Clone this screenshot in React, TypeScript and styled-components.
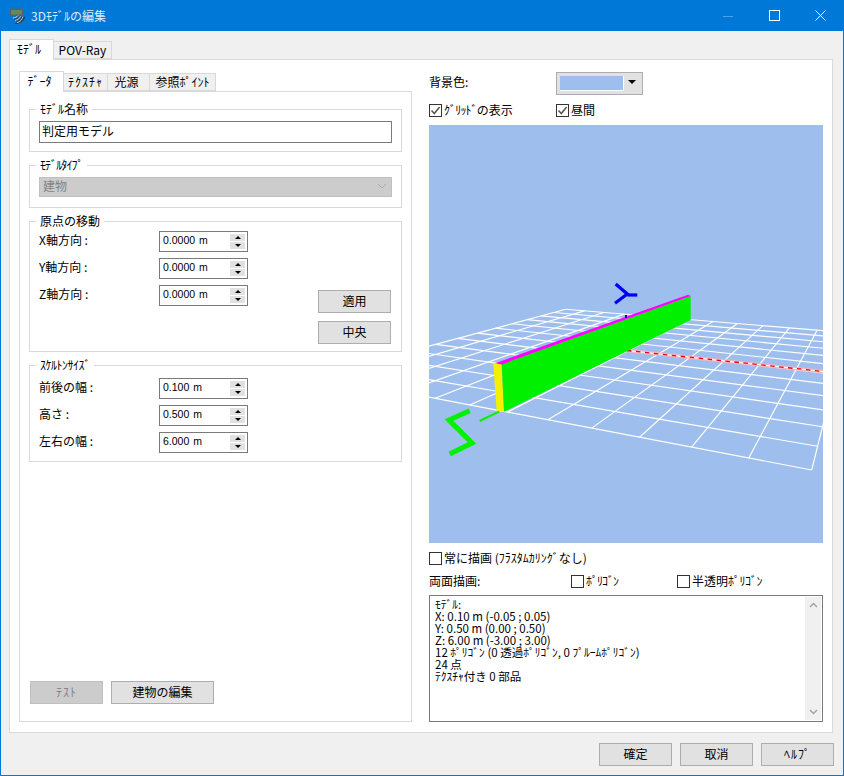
import React from "react";
import styled, { createGlobalStyle } from "styled-components";

const Global = createGlobalStyle`
  html, body { margin: 0; padding: 0; background: #f0f0f0; overflow: hidden; }
  body { font-family: "Noto Sans CJK JP", "Liberation Sans", sans-serif; font-size: 12px; color: #000; }
  * { box-sizing: border-box; }
`;

const Window = styled.div`
  width: 844px; height: 776px; display: flex; flex-direction: column;
  border: 1px solid #0078d7; border-top: none; background: #f0f0f0;
`;
const TitleBar = styled.header`
  height: 31px; flex: none; margin: 0 -1px; background: #0078d7; display: flex; align-items: center;
  padding-left: 9px; padding-right: 1px; color: #dcecfa; line-height: 16px;
`;
const TitleText = styled.span`margin-left: 6px; flex: 1;`;
const CaptionButton = styled.span`
  width: 46px; height: 31px; display: flex; align-items: center; justify-content: center;
`;
const Body = styled.main`
  flex: 1; min-height: 0; display: flex; flex-direction: column; padding: 8px 9px 9px 8px;
`;
const TabStrip = styled.div`
  height: 20px; flex: none; display: flex; align-items: flex-start; position: relative; z-index: 1;
`;
const Tab = styled.div<{ $active?: boolean; $w: number; $pr?: number }>`
  width: ${p => p.$w}px; flex: none; text-align: center; line-height: 17px;
  border: 1px solid #d9d9d9;
  padding-right: ${p => p.$pr ?? 0}px;
  ${p => p.$active
    ? `height: 21px; background: #fff; border-bottom: none;`
    : `height: 18px; margin-top: 2px; background: #f0f0f0; border-left: none; line-height: 16px;`}
`;
const Kana = styled.span<{ $track: number }>`letter-spacing: ${p => p.$track}px;`;
const OuterPanel = styled.section`
  flex: 1; min-height: 0; margin-right: 1px; background: #fff; border: 1px solid #d9d9d9;
  padding: 11px 9px 10px 9px; display: flex; gap: 17px;
`;
const LeftColumn = styled.div`width: 393px; flex: none; display: flex; flex-direction: column;`;
const InnerPanel = styled.div`
  flex: 1; min-height: 0; border: 1px solid #d9d9d9; padding: 10px 9px 17px 9px;
  display: flex; flex-direction: column; gap: 6px;
`;
const Group = styled.fieldset<{ $top: number; $bottom: number }>`
  margin: 0; min-width: 0; border: 1px solid #d9d9d9;
  padding: ${p => p.$top}px 9px ${p => p.$bottom}px 9px;
`;
const Legend = styled.legend`
  margin-left: -3px; padding: 0 4px; height: 14px; line-height: 14px; font-size: 12px;
`;
const NameInput = styled.input`
  display: block; width: 100%; height: 22px; border: 1px solid #7a7a7a; background: #fff; padding: 0 2px 3px 2px;
  font: 12px/17px "Noto Sans CJK JP", sans-serif; color: #000; outline: none;
`;
const DisabledSelect = styled.div`
  height: 20px; background: #cccccc; border: 1px solid #bfbfbf; color: #838383; line-height: 16px;
  padding: 0 4px 2px 3px; display: flex; justify-content: space-between; align-items: center;
`;
const Split = styled.div`display: flex; justify-content: space-between; align-items: flex-end; height: 113px; padding-right: 1px;`;
const Rows = styled.div`align-self: flex-start; display: flex; flex-direction: column; gap: 6px; width: 209px;`;
const Row = styled.div`display: flex; align-items: center; justify-content: space-between; height: 21px;`;
const RowLabel = styled.span`line-height: 16px; margin-top: -3px;`;
const Spin = styled.div`
  width: 89px; height: 21px; border: 1px solid #7a7a7a; background: #fff; display: flex; align-items: center; padding: 0 2px 0 3px;
`;
const SpinValue = styled.input`
  flex: 1; min-width: 0; border: none; padding: 0; background: transparent; outline: none; height: 16px; margin-top: -3px;
  font: 10.5px/16px "Liberation Sans", sans-serif; color: #000; word-spacing: 1px;
`;
const SpinButtons = styled.div`width: 15px; display: flex; flex-direction: column; gap: 1px;`;
const SpinButton = styled.span<{ $up?: boolean }>`
  height: 7px; background: #e1e1e1; display: flex; align-items: center; justify-content: center;
  &::after {
    content: ""; border-left: 3px solid transparent; border-right: 3px solid transparent;
    ${p => p.$up ? "border-bottom: 3px solid #000;" : "border-top: 3px solid #000;"}
  }
`;
const ButtonStack = styled.div`display: flex; flex-direction: column; gap: 8px;`;
const Button = styled.button<{ $w?: number; $disabled?: boolean }>`
  width: ${p => p.$w ?? 73}px; height: 23px; padding: 0 0 2px 0; flex: none;
  background: ${p => p.$disabled ? "#cccccc" : "#e1e1e1"};
  border: 1px solid ${p => p.$disabled ? "#bfbfbf" : "#adadad"};
  color: ${p => p.$disabled ? "#838383" : "#000"};
  font: 12px/18px "Noto Sans CJK JP", sans-serif;
`;
const ActionRow = styled.div`margin-top: auto; padding-left: 1px; display: flex; gap: 8px;`;
const RightColumn = styled.div`flex: 1; min-width: 0; display: flex; flex-direction: column;`;
const ColorRow = styled.div`height: 24px; flex: none; display: flex; align-items: center;`;
const FixedCell = styled.div<{ $w: number }>`
  width: ${p => p.$w}px; flex: none; line-height: 14px; height: 14px; display: flex; align-items: center;
`;
const ColorLabel = styled.span`margin-top: -3px;`;
const ColorCombo = styled.div`
  width: 87px; height: 23px; background: #e1e1e1; border: 1px solid #adadad; padding: 3px 0 0 3px; display: flex;
  gap: 4px; margin-top: 1px;
`;
const Swatch = styled.span`
  width: 64px; height: 15px; background: #9ebeed; border-right: 1px solid #fff; border-bottom: 1px solid #fff;
`;
const ComboArrow = styled.span`
  margin-top: 4px; width: 0; height: 0; border-left: 4px solid transparent; border-right: 4px solid transparent;
  border-top: 4px solid #000;
`;
const CheckRow = styled.div`height: 14px; flex: none; margin-top: 8px; display: flex; align-items: center;`;
const CheckLabel = styled.label`display: inline-flex; align-items: center; gap: 2px; line-height: 14px; white-space: nowrap;`;
const CheckBox = styled.span`
  width: 13px; height: 13px; flex: none; border: 1px solid #333; background: #fff; display: flex;
  align-items: center; justify-content: center;
`;
const Viewport = styled.svg`
  display: block; flex: none; width: 394px; height: 418px; margin-top: 8px; background: #9ebeed;
`;
const OptionRow = styled.div`height: 14px; flex: none; margin-top: 8px; display: flex; align-items: center;`;
const DoubleRow = styled.div`height: 14px; flex: none; margin-top: 9px; display: flex; align-items: center;`;
const InfoBox = styled.div`
  flex: 1; min-height: 0; margin-top: 7px; border: 1px solid #7a7a7a; background: #fff; display: flex;
  padding: 1px 1px 1px 5px;
`;
const InfoText = styled.div`
  flex: 1; white-space: pre; line-height: 12px; font-size: 11.5px; padding-top: 1px;
`;
const ScrollBar = styled.div`
  width: 16px; background: #f0f0f0; display: flex; flex-direction: column; justify-content: space-between;
  align-items: center; padding: 5px 0;
`;
const Footer = styled.footer`flex: none; margin-top: 10px; display: flex; justify-content: flex-end; gap: 8px;`;

type Pt = [number, number];

// Projective map of the unit square on the floor grid's four corners.
function project(q: [Pt, Pt, Pt, Pt]) {
  const [[x0, y0], [x1, y1], [x2, y2], [x3, y3]] = q;
  const dx1 = x1 - x2, dx2 = x3 - x2, sx = x0 - x1 + x2 - x3;
  const dy1 = y1 - y2, dy2 = y3 - y2, sy = y0 - y1 + y2 - y3;
  const d = dx1 * dy2 - dx2 * dy1;
  const g = (sx * dy2 - dx2 * sy) / d;
  const h = (dx1 * sy - sx * dy1) / d;
  const a = x1 - x0 + g * x1, b = x3 - x0 + h * x3;
  const e = y1 - y0 + g * y1, f = y3 - y0 + h * y3;
  return (u: number, v: number): Pt => {
    const w = g * u + h * v + 1;
    return [(a * u + b * v + x0) / w, (e * u + f * v + y0) / w];
  };
}

const CELLS = 12;
const toFloor = project([[318, 376], [811.7, 470], [846, 332.6], [565.7, 309.3]]);
const floorLines = Array.from({ length: CELLS + 1 }, (_, i) => i / CELLS).flatMap(t => [
  [toFloor(t, 0), toFloor(t, 1)],
  [toFloor(0, t), toFloor(1, t)],
]);

const Scene = () => (
  <Viewport viewBox="429 125 394 418">
    <g stroke="#fff" strokeWidth={1.15}>
      {floorLines.map(([p, q], i) => (
        <line key={i} x1={p[0]} y1={p[1]} x2={q[0]} y2={q[1]} />
      ))}
    </g>
    <line x1={627} y1={350.5} x2={823} y2={371.5} stroke="#f6b4bf" strokeWidth={3.4} />
    <line x1={627} y1={350.5} x2={823} y2={371.5} stroke="#fff" strokeWidth={1} />
    <line x1={627} y1={350.5} x2={823} y2={371.5} stroke="#f00000" strokeWidth={1.3} strokeDasharray="4.5 4.5" />
    <polygon points="493.3,364 501.7,364 504,411.7 496.7,411.7" fill="#f5f000" />
    <polygon points="501.7,364 690.7,296 690.7,320 504,411.7" fill="#00f000" />
    <polygon points="495,363.2 688,294.8 690.7,296 501.7,364.4" fill="#ff00ff" />
    <rect x={625} y={315} width={2} height={3} fill="#0000f0" />
    <polyline points="615.7,284 627.3,294 615,303.3" fill="none" stroke="#0000f0" strokeWidth={3.2} />
    <line x1={627.3} y1={295} x2={637.3} y2={295} stroke="#0000f0" strokeWidth={3.2} />
    <line x1={499} y1={411.7} x2={479.7} y2={421} stroke="#00f000" strokeWidth={2} />
    <polyline points="469.7,410.7 449,420 472,443 449.7,454" fill="none" stroke="#00f000" strokeWidth={5} />
  </Viewport>
);

const Check = ({ on, children }: { on?: boolean; children: React.ReactNode }) => (
  <CheckLabel>
    <CheckBox>
      {on && (
        <svg width="11" height="11" viewBox="0 0 11 11">
          <path d="M1.5 5.5 L4.3 8.5 L9.6 2" fill="none" stroke="#555" strokeWidth="1.5" />
        </svg>
      )}
    </CheckBox>
    <span>{children}</span>
  </CheckLabel>
);

const SpinRow = ({ label, value }: { label: string; value: string }) => (
  <Row>
    <RowLabel>{label}</RowLabel>
    <Spin>
      <SpinValue readOnly value={value} />
      <SpinButtons>
        <SpinButton $up />
        <SpinButton />
      </SpinButtons>
    </Spin>
  </Row>
);

const info = `ﾓﾃﾞﾙ:
X: 0.10 m (-0.05 ; 0.05)
Y: 0.50 m (0.00 ; 0.50)
Z: 6.00 m (-3.00 ; 3.00)
12 ﾎﾟﾘｺﾞﾝ (0 透過ﾎﾟﾘｺﾞﾝ, 0 ﾌﾟﾙｰﾑﾎﾟﾘｺﾞﾝ)
24 点
ﾃｸｽﾁｬ付き 0 部品`;

export default function App() {
  return (
    <>
      <Global />
      <Window>
        <TitleBar>
          <svg width="16" height="16" viewBox="0 0 16 16">
            <rect x="1" y="0.5" width="13" height="7.5" fill="#55606a" />
            <rect x="2" y="2" width="11" height="4.5" fill="#5e8a5c" />
            <path d="M5 15.5 C10 15 13 12 14 8 L16 9 C15.5 12 12 16 7 16 Z" fill="#30363c" />
            <path d="M4 10 C6 10 8 9 9 7.5 M6 12.5 C8.5 12 10.5 10.5 11.5 8 M8 14.5 C11 14 13 12 14 8.5" fill="none" stroke="#d0d4d8" strokeWidth="1" />
            <path d="M5 11.2 C7.5 11 9.5 10 10.4 8 M7 13.5 C10 13 12 11.5 12.8 8.5" fill="none" stroke="#30363c" strokeWidth="1" />
          </svg>
          <TitleText>3Dﾓﾃﾞﾙの編集</TitleText>
          <CaptionButton>
            <svg width="10" height="10" viewBox="0 0 10 10"><line x1="0" y1="5.5" x2="10" y2="5.5" stroke="#4da0e6" /></svg>
          </CaptionButton>
          <CaptionButton>
            <svg width="11" height="11" viewBox="0 0 11 11"><rect x="0.5" y="0.5" width="10" height="10" fill="none" stroke="#fff" /></svg>
          </CaptionButton>
          <CaptionButton>
            <svg width="11" height="11" viewBox="0 0 11 11"><path d="M0.5 0.5 L10.5 10.5 M10.5 0.5 L0.5 10.5" stroke="#fff" /></svg>
          </CaptionButton>
        </TitleBar>
        <Body>
          <TabStrip>
            <Tab $active $w={45} $pr={5}>ﾓﾃﾞﾙ</Tab>
            <Tab $w={58}>POV-Ray</Tab>
          </TabStrip>
          <OuterPanel>
            <LeftColumn>
              <TabStrip>
                <Tab $active $w={45} $pr={4}>ﾃﾞｰﾀ</Tab>
                <Tab $w={44}><Kana $track={1}>ﾃｸｽﾁｬ</Kana></Tab>
                <Tab $w={42} $pr={4}>光源</Tab>
                <Tab $w={66}>参照ﾎﾟｲﾝﾄ</Tab>
              </TabStrip>
              <InnerPanel>
                <Group $top={5} $bottom={8}>
                  <Legend>ﾓﾃﾞﾙ名称</Legend>
                  <NameInput readOnly value="判定用モデル" />
                </Group>
                <Group $top={5} $bottom={10}>
                  <Legend><Kana $track={-0.9}>ﾓﾃﾞﾙﾀｲﾌﾟ</Kana></Legend>
                  <DisabledSelect>
                    建物
                    <svg width="10" height="6" viewBox="0 0 10 6"><path d="M1 1 L5 5 L9 1" fill="none" stroke="#a8a8a8" /></svg>
                  </DisabledSelect>
                </Group>
                <Group $top={3} $bottom={7}>
                  <Legend>原点の移動</Legend>
                  <Split>
                    <Rows>
                      <SpinRow label="X軸方向 :" value="0.0000 m" />
                      <SpinRow label="Y軸方向 :" value="0.0000 m" />
                      <SpinRow label="Z軸方向 :" value="0.0000 m" />
                    </Rows>
                    <ButtonStack>
                      <Button>適用</Button>
                      <Button>中央</Button>
                    </ButtonStack>
                  </Split>
                </Group>
                <Group $top={6} $bottom={8}>
                  <Legend><Kana $track={-0.5}>ｽｹﾙﾄﾝｻｲｽﾞ</Kana></Legend>
                  <Rows>
                    <SpinRow label="前後の幅 :" value="0.100 m" />
                    <SpinRow label="高さ :" value="0.500 m" />
                    <SpinRow label="左右の幅 :" value="6.000 m" />
                  </Rows>
                </Group>
                <ActionRow>
                  <Button $disabled><Kana $track={1}>ﾃｽﾄ</Kana></Button>
                  <Button $w={103}>建物の編集</Button>
                </ActionRow>
              </InnerPanel>
            </LeftColumn>
            <RightColumn>
              <ColorRow>
                <FixedCell $w={127}><ColorLabel>背景色:</ColorLabel></FixedCell>
                <ColorCombo>
                  <Swatch />
                  <ComboArrow />
                </ColorCombo>
              </ColorRow>
              <CheckRow>
                <FixedCell $w={127}><Check on><Kana $track={-0.8}>ｸﾞﾘｯﾄﾞ</Kana>の表示</Check></FixedCell>
                <Check on>昼間</Check>
              </CheckRow>
              <Scene />
              <OptionRow>
                <Check>常に描画 (ﾌﾗｽﾀﾑｶﾘﾝｸﾞなし)</Check>
              </OptionRow>
              <DoubleRow>
                <FixedCell $w={142}>両面描画:</FixedCell>
                <FixedCell $w={106}><Check><Kana $track={-1}>ﾎﾟﾘｺﾞﾝ</Kana></Check></FixedCell>
                <Check>半透明<Kana $track={-0.5}>ﾎﾟﾘｺﾞﾝ</Kana></Check>
              </DoubleRow>
              <InfoBox>
                <InfoText>{info}</InfoText>
                <ScrollBar>
                  <svg width="9" height="6" viewBox="0 0 9 6"><path d="M1 5 L4.5 1.5 L8 5" fill="none" stroke="#a3a3a3" strokeWidth="1.5" /></svg>
                  <svg width="9" height="6" viewBox="0 0 9 6"><path d="M1 1 L4.5 4.5 L8 1" fill="none" stroke="#a3a3a3" strokeWidth="1.5" /></svg>
                </ScrollBar>
              </InfoBox>
            </RightColumn>
          </OuterPanel>
          <Footer>
            <Button>確定</Button>
            <Button>取消</Button>
            <Button><Kana $track={1}>ﾍﾙﾌﾟ</Kana></Button>
          </Footer>
        </Body>
      </Window>
    </>
  );
}
